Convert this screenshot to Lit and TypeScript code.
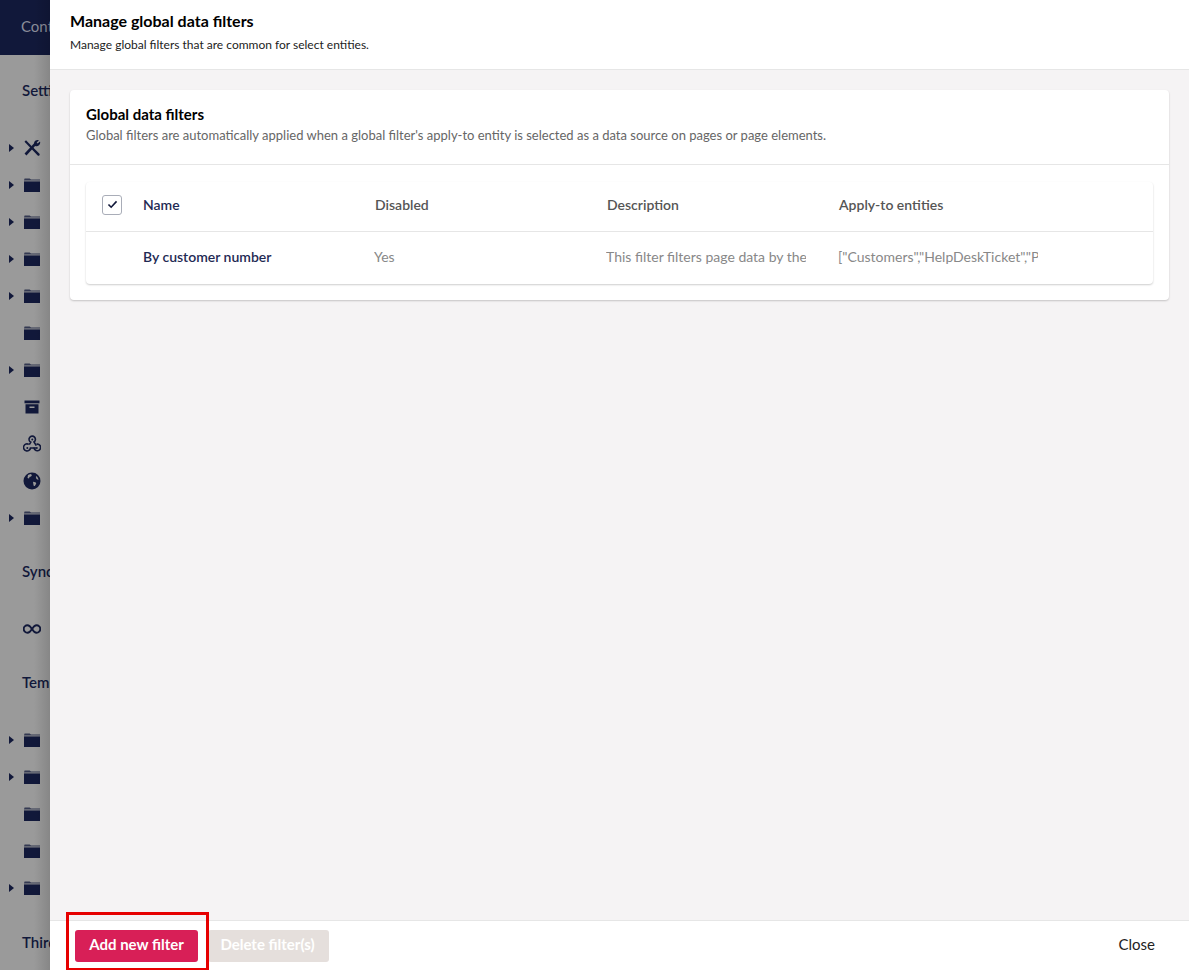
import { LitElement, html, css } from "lit";
import { customElement } from "lit/decorators.js";

const folder = html`<svg class="ico" viewBox="0 0 18 16" width="18" height="16"><path d="M1 3.200 1.600 1.400H6.600L8 2.600H17V3.400H1Z" fill="currentColor" opacity=".75"/><path d="M1 4.400H17V15H1Z" fill="currentColor"/></svg>`;
const tools = html`<svg class="ico" viewBox="0 0 18 18" width="18" height="18"><path d="M2.500 15.500 13 4.200" stroke="currentColor" stroke-width="2.600" fill="none"/><path d="M11 4.600a3.600 3.600 0 0 1 5-3.400L13.700 3.400 14.600 4.600 17 2.600a3.600 3.600 0 0 1-4.800 4.400Z" fill="currentColor"/><path d="M1.500 2.800 3 1.200 9 7.500 7.500 9Z" fill="currentColor"/><path d="M8.500 10 10.200 8.400 16.500 14.800a1.300 1.300 0 0 1-1.800 1.800Z" fill="currentColor"/></svg>`;
const archive = html`<svg class="ico" viewBox="0 0 18 16" width="18" height="16"><path d="M1.500 1.500H16.500V4.300H1.500Z" fill="currentColor"/><path fill-rule="evenodd" d="M2.500 5.300H15.500V14.500H2.500ZM6.500 7.500V9H11.500V7.500Z" fill="currentColor"/></svg>`;
const hook = html`<svg class="ico" viewBox="0 0 18 18" width="18" height="18" fill="none" stroke="currentColor" stroke-width="1.600"><path d="M6.300 9.700 7.800 7.200A3.200 3.200 0 1 1 11 7L13.300 10.700"/><circle cx="9.300" cy="4.500" r="1" fill="currentColor" stroke="none"/><path d="M5.800 9.400A3.500 3.500 0 1 0 7.500 13H13"/><circle cx="4.300" cy="13" r="1" fill="currentColor" stroke="none"/><path d="M11 12.500A3.300 3.300 0 1 0 13.500 9.200"/><circle cx="13.800" cy="13" r="1" fill="currentColor" stroke="none"/></svg>`;
const globe = html`<svg class="ico" viewBox="0 0 18 18" width="18" height="18"><circle cx="9" cy="9" r="8.500" fill="currentColor"/><path d="M5 3 7.500 2 9 3 8 4.500 6.500 5 6 6.500 4.500 6ZM10 9.800 12.500 10.300 13.300 11.500 11.800 14 10.800 14 10.300 12ZM13.500 4 15 6 15.500 8 13.500 7 12.800 5Z" fill="#9a9a9a"/></svg>`;
const inf = html`<svg class="ico" viewBox="0 0 18 10" width="18" height="10" fill="none" stroke="currentColor" stroke-width="1.900"><path d="M9 5C7.500 2.600 6.300 1.200 4.500 1.200a3.800 3.800 0 0 0 0 7.600C6.300 8.800 7.500 7.400 9 5C10.500 2.600 11.700 1.200 13.500 1.200a3.800 3.800 0 0 1 0 7.600C11.700 8.800 10.500 7.400 9 5Z"/></svg>`;

@customElement("app-root")
export class AppRoot extends LitElement {
  static styles = css`
    :host { display: block; width: 1189px; height: 970px; overflow: hidden; font-family: Lato, "Liberation Sans", sans-serif; position: relative; }
    .page { display: grid; grid-template-columns: 50px 1fr; height: 970px; }
    .side { position: relative; background: #9a9a9a; color: #11183a; overflow: hidden; white-space: nowrap; }
    .side::after { content: ""; position: absolute; top: 0; bottom: 0; right: 0; width: 16px; background: linear-gradient(to right, rgba(0,0,0,0), rgba(0,0,0,.13)); }
    .bar { height: 55px; background: #11183a; color: #8a8c99; font-size: 15px; display: flex; align-items: center; padding: 0 0 3px 21px; box-sizing: border-box; }
    .lab { font-size: 15px; font-weight: 600; height: 20px; line-height: 20px; padding-left: 22px; }
    .rows { display: flex; flex-direction: column; }
    .row { height: 37px; display: flex; align-items: center; position: relative; padding-left: 23px; }
    .row.caret::before { content: ""; position: absolute; left: 9px; top: 15px; border-left: 5px solid #11183a; border-top: 4.500px solid transparent; border-bottom: 4.500px solid transparent; }
    .ico { display: block; flex: none; }
    .s1 { margin-top: 25px; }
    .r1 { margin-top: 29px; }
    .s2 { margin-top: 25px; }
    .r2 { height: 37px; margin-top: 29px; padding-left: 23px; display: flex; align-items: center; }
    .s3 { margin-top: 25px; }
    .r3 { margin-top: 29px; }
    .s4 { margin-top: 26px; }
    .drawer { background: #f5f3f4; display: flex; flex-direction: column; min-width: 0; height: 970px; }
    .dh { height: 70px; box-sizing: border-box; background: #fff; border-bottom: 1px solid #e6e6e6; padding: 11px 20px 0; color: #000; }
    .dh h1 { margin: 0; font-size: 16px; line-height: 20px; font-weight: 700; }
    .dh p { margin: 6px 0 0; font-size: 12px; line-height: 16px; color: #222; }
    .body { flex: 1; padding: 20px; min-height: 0; }
    .card { background: #fff; border-radius: 4px; box-shadow: 0 1px 2px rgba(0,0,0,.2); }
    .ch { height: 75px; box-sizing: border-box; border-bottom: 1px solid #e6e6e6; padding: 15px 16px 0; }
    .ch h2 { margin: 0; font-size: 15px; line-height: 19px; font-weight: 700; color: #000; }
    .ch p { margin: 2px 0 0; font-size: 13px; line-height: 18px; color: #666; }
    .cb { padding: 17px 16px 16px; }
    .table { border-radius: 4px; box-shadow: 0 1px 2px rgba(0,0,0,.2); background: #fff; }
    .tr { display: grid; grid-template-columns: 57px 232px 232px 232px 1fr; align-items: center; font-size: 14px; }
    .thead { height: 50px; padding-bottom: 4px; border-bottom: 1px solid #e6e6e6; box-sizing: border-box; color: #555; font-weight: 600; }
    .tbody { height: 52px; padding-bottom: 4px; box-sizing: border-box; color: #888; }
    .name { color: #1f2a54; font-weight: 600; }
    .cbx { margin-left: 16px; width: 20px; height: 20px; box-sizing: border-box; border: 1px solid #a9adb8; border-radius: 3px; display: flex; align-items: center; justify-content: center; }
    .clip { overflow: hidden; white-space: nowrap; width: 200px; margin-left: -1px; }
    .df { height: 50px; box-sizing: border-box; background: #fff; border-top: 1px solid #e6e6e6; display: flex; align-items: center; padding: 0 34px 0 25px; gap: 10px; font-size: 15px; }
    .btn { height: 32px; box-sizing: border-box; padding-bottom: 3px; border-radius: 3px; display: flex; align-items: center; justify-content: center; font-weight: 700; color: #fff; }
    .add { width: 123px; background: #d81f57; }
    .del { width: 121px; background: #e5dfdc; padding-right: 2px; }
    .close { margin-left: auto; color: #222; padding-bottom: 3px; }
    .mark { position: absolute; left: 66px; top: 912px; width: 143px; height: 58px; box-sizing: border-box; border: 3px solid #e60000; border-bottom-width: 2px; pointer-events: none; }
  `;

  render() {
    const r = (icon: unknown, caret = true) => html`<div class="row ${caret ? "caret" : ""}">${icon}</div>`;
    return html`
      <div class="page">
        <aside class="side">
          <div class="bar">Content</div>
          <div class="lab s1">Settings</div>
          <div class="rows r1">
            ${r(tools)}${r(folder)}${r(folder)}${r(folder)}${r(folder)}${r(folder, false)}${r(folder)}
            ${r(archive, false)}${r(hook, false)}${r(globe, false)}${r(folder)}
          </div>
          <div class="lab s2">Synchronization</div>
          <div class="r2">${inf}</div>
          <div class="lab s3">Templates</div>
          <div class="rows r3">
            ${r(folder)}${r(folder)}${r(folder, false)}${r(folder, false)}${r(folder)}
          </div>
          <div class="lab s4">Third party</div>
        </aside>
        <main class="drawer">
          <header class="dh">
            <h1>Manage global data filters</h1>
            <p>Manage global filters that are common for select entities.</p>
          </header>
          <div class="body">
            <section class="card">
              <div class="ch">
                <h2>Global data filters</h2>
                <p>Global filters are automatically applied when a global filter's apply-to entity is selected as a data source on pages or page elements.</p>
              </div>
              <div class="cb">
                <div class="table">
                  <div class="tr thead">
                    <div><div class="cbx"><svg viewBox="0 0 12 10" width="11" height="9" fill="none" stroke="#11183a" stroke-width="1.800"><path d="M1.500 5 4.500 8 10.500 1.500"/></svg></div></div>
                    <div class="name">Name</div><div>Disabled</div><div>Description</div><div>Apply-to entities</div>
                  </div>
                  <div class="tr tbody">
                    <div></div>
                    <div class="name">By customer number</div>
                    <div class="clip">Yes</div>
                    <div class="clip">This filter filters page data by the customer number</div>
                    <div class="clip">["Customers","HelpDeskTicket","Products"]</div>
                  </div>
                </div>
              </div>
            </section>
          </div>
          <footer class="df">
            <div class="btn add">Add new filter</div>
            <div class="btn del">Delete filter(s)</div>
            <div class="close">Close</div>
          </footer>
        </main>
      </div>
      <div class="mark"></div>
    `;
  }
}
